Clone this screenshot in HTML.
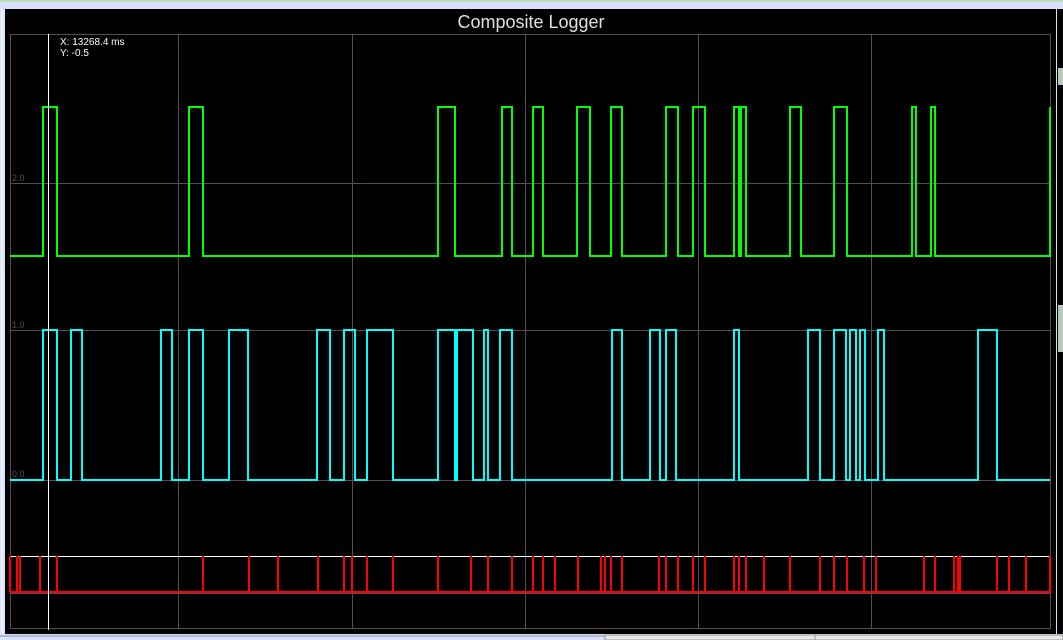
<!DOCTYPE html><html><head><style>body{margin:0;width:1063px;height:640px;overflow:hidden;background:#d8e0fb;font-family:"Liberation Sans",sans-serif}</style></head><body>
<svg width="1063" height="640" style="position:absolute;left:0;top:0">
<rect x="0" y="0" width="1063" height="640" fill="#d8e0fb"/>
<rect x="0" y="0" width="1063" height="2" fill="#c0dcc0"/>
<rect x="5" y="9" width="1051" height="625" fill="#000"/>
<rect x="1057" y="9" width="6" height="625" fill="#000"/>
<rect x="1058" y="68" width="5" height="17" fill="#b8c8b8"/>
<rect x="1058" y="305" width="5" height="47" fill="#b8c8b8"/>
<line x1="2" y1="9" x2="2" y2="634" stroke="#fff"/>
<rect x="0" y="634" width="1063" height="6" fill="#d8e0fb"/>
<line x1="0" y1="636" x2="610" y2="636" stroke="#8890a8"/>
<rect x="605" y="635" width="210" height="5" fill="#e8e8e8" stroke="#999"/>
<rect x="815" y="635" width="248" height="5" fill="#e8e8e8" stroke="#999"/>
<text x="531" y="28" font-size="18" fill="#e0e0e0" text-anchor="middle">Composite Logger</text>
<g stroke="#5a4a5a" fill="none">
<rect x="10.5" y="34.5" width="1040" height="594"/>
<path d="M178.5 34V628M352.5 34V628M525.5 34V628M698.5 34V628M871.5 34V628M10 183.5H1050M10 330.5H1050M10 480.5H1050M10 593.5H1050"/>
</g>
<g font-size="9" fill="#5a4a5a"><text x="12" y="181">2.0</text><text x="12" y="328">1.0</text><text x="12" y="477">0.0</text></g>
<path fill="none" stroke="#00ff00" stroke-width="2" d="M10 256H43V107H57V256H189V107H203V256H438V107H455V256H502V107H512V256H533V107H543V256H577V107H590V256H611V107H622V256H666V107H678V256H693V107H705V256H734V107H739V256H741V107H746V256H790V107H801V256H834V107H847V256H912V107H916V256H931V107H935V256H1050V107"/>
<path fill="none" stroke="#00ffff" stroke-width="2" d="M10 480H43V330H57V480H71V330H82V480H161V330H172V480H189V330H203V480H229V330H248V480H317V330H330V480H344V330H355V480H367V330H393V480H438V330H455V480H457V330H473V480H484V330H488V480H500V330H512V480H612V330H622V480H650V330H660V480H666V330H676V480H734V330H739V480H808V330H820V480H834V330H846V480H850V330H856V480H860V330H865V480H878V330H884V480H978V330H997V480H1050"/>
<line x1="10" y1="556.5" x2="1051" y2="556.5" stroke="#fff"/>
<path fill="none" stroke="#ff0000" stroke-width="2" d="M10 592H1051M10 556V592M17 556V592M20 556V592M40 556V592M57 556V592M203 556V592M249 556V592M278 556V592M318 556V592M344 556V592M352 556V592M367 556V592M393 556V592M438 556V592M471 556V592M488 556V592M512 556V592M533 556V592M543 556V592M555 556V592M578 556V592M601 556V592M605 556V592M611 556V592M622 556V592M659 556V592M666 556V592M678 556V592M693 556V592M705 556V592M734 556V592M739 556V592M746 556V592M764 556V592M790 556V592M820 556V592M834 556V592M847 556V592M864 556V592M876 556V592M924 556V592M935 556V592M954 556V592M958 556V592M960 556V592M997 556V592M1009 556V592M1026 556V592M1050 556V592"/>
<line x1="48.5" y1="34" x2="48.5" y2="630" stroke="#fff"/>
<g font-size="10" fill="#fff"><text x="60" y="45">X: 13268.4 ms</text><text x="60" y="56">Y: -0.5</text></g>
</svg></body></html>
